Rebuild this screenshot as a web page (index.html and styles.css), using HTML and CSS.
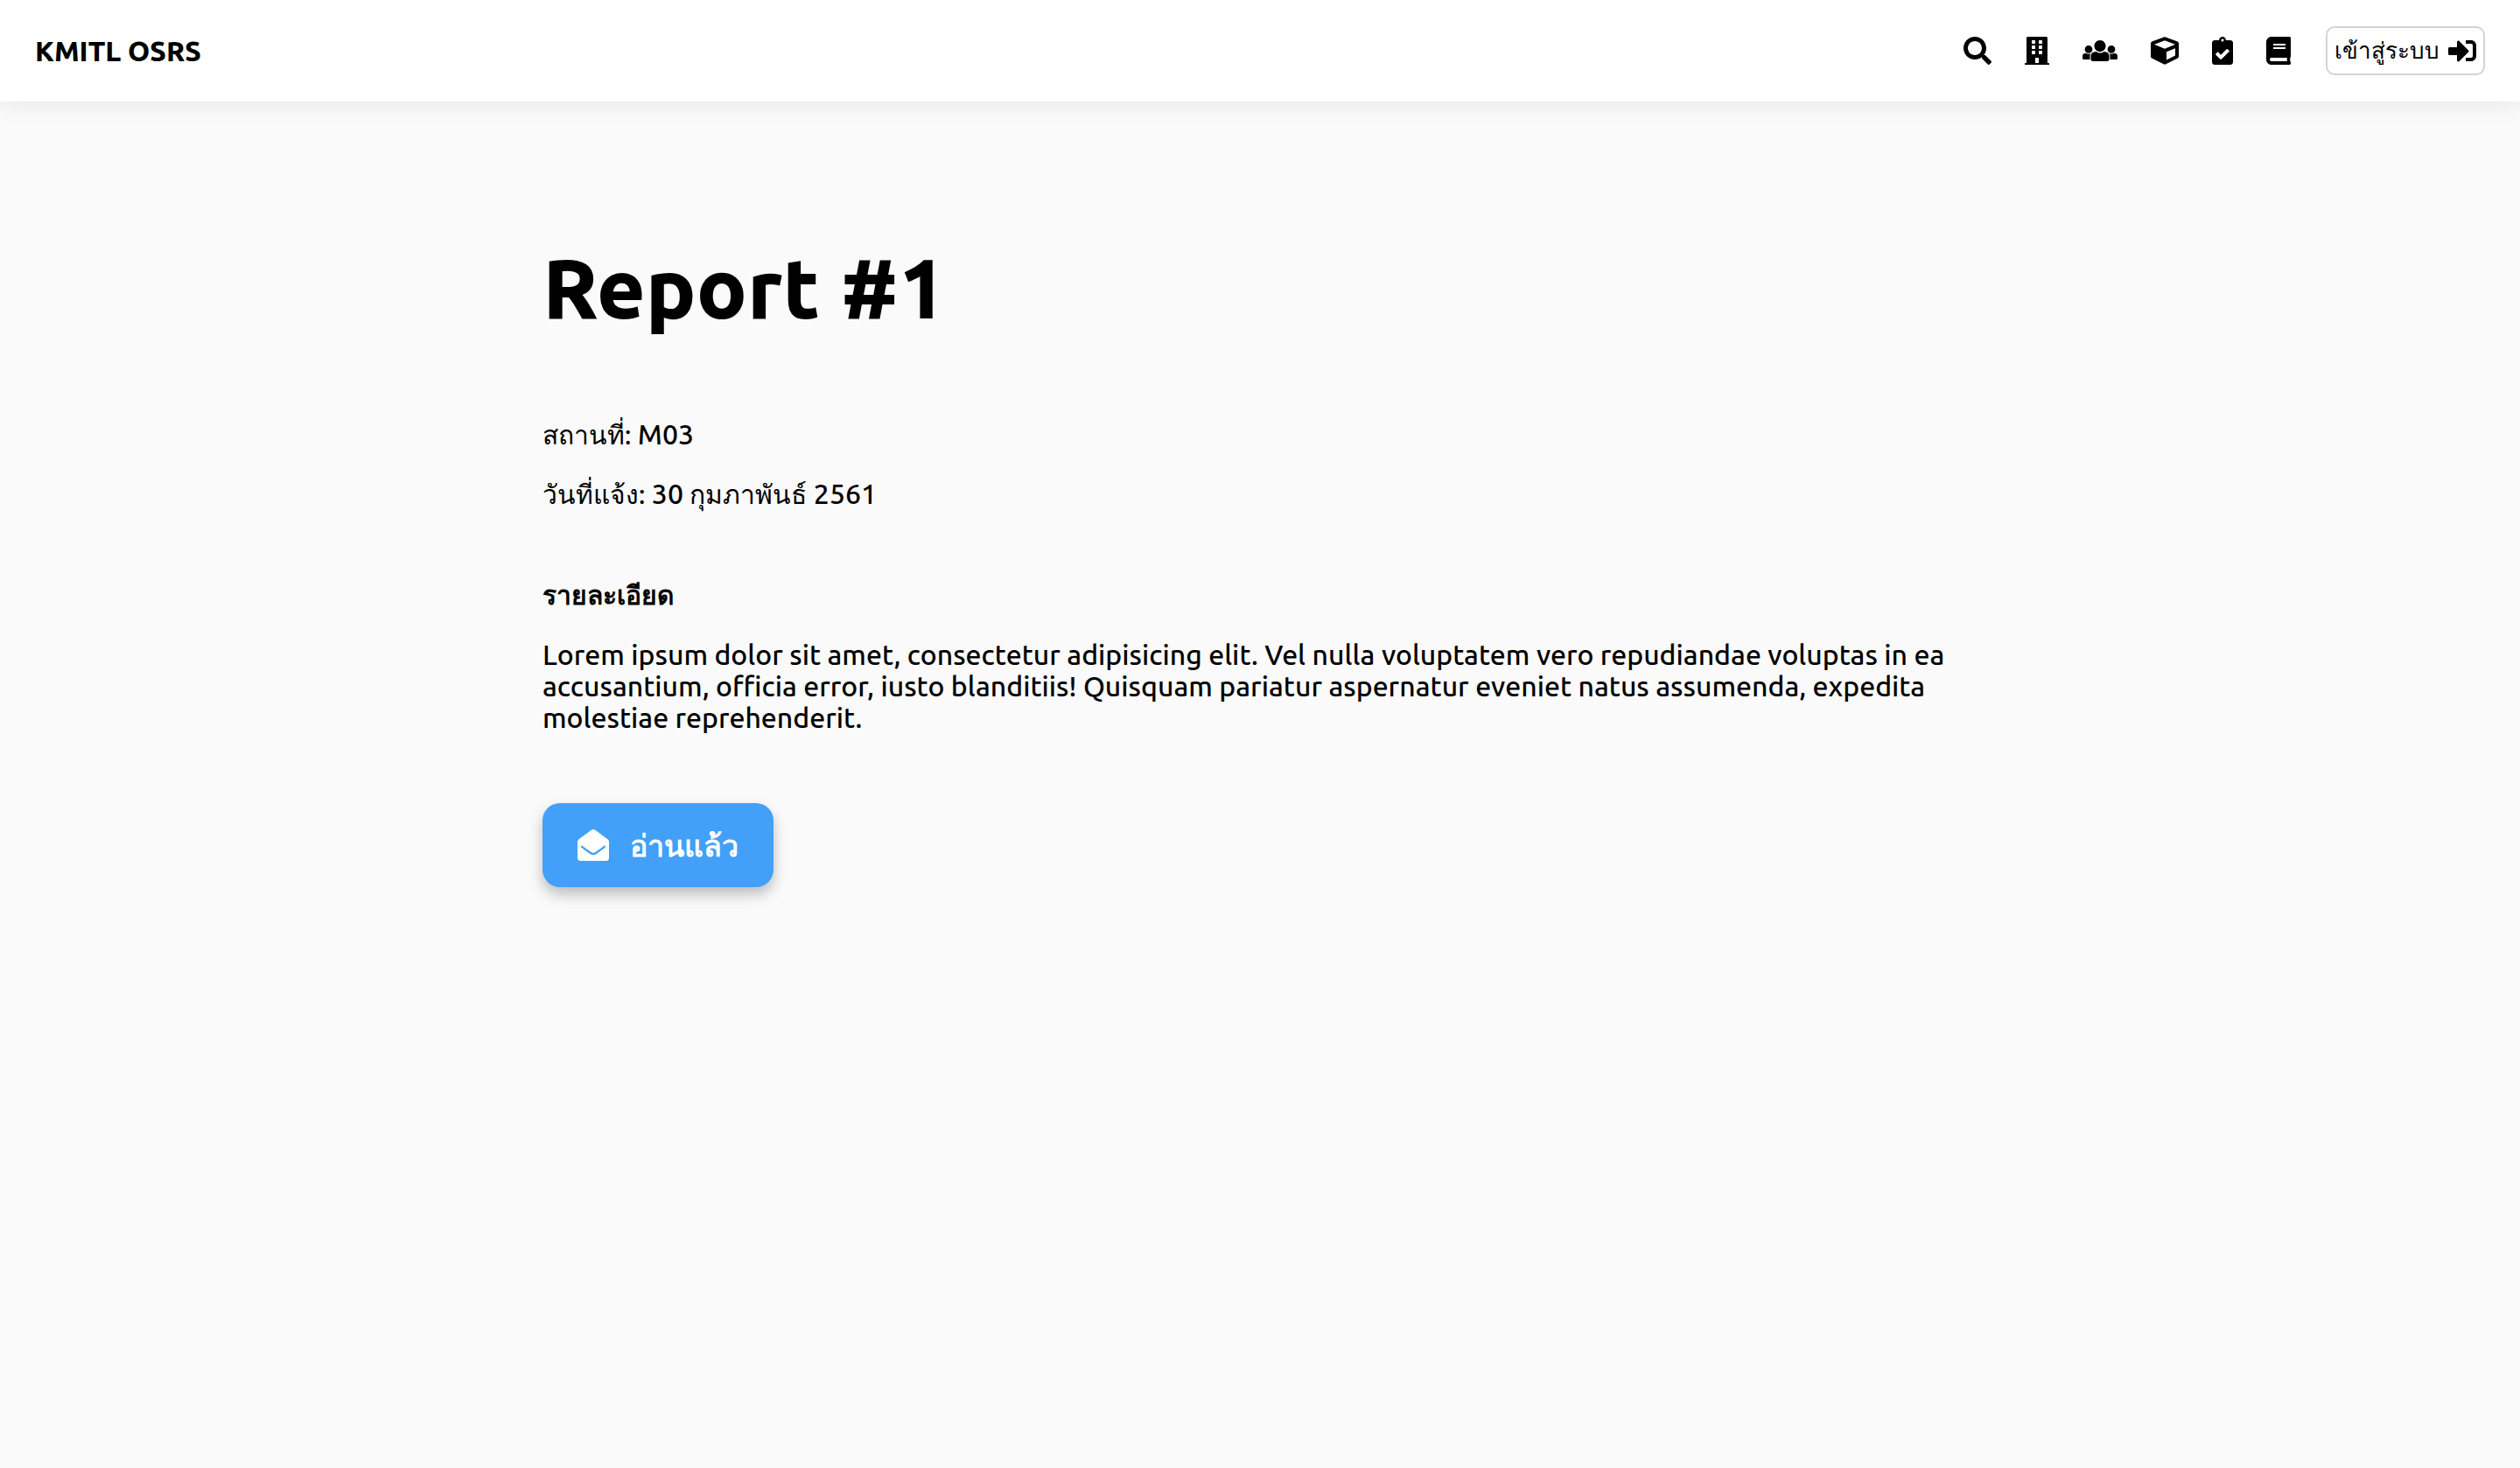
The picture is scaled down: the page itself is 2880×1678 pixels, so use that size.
FILE: index.html
```html
<!DOCTYPE html>
<html lang="th">
<head>
<meta charset="utf-8">
<title>KMITL OSRS</title>
<link rel="stylesheet" href="styles.css">
</head>
<body>
<header class="navbar">
  <a class="brand" href="#">KMITL OSRS</a>
  <nav class="menu">
    <a class="menu-link" href="#" aria-label="Search"><svg class="icon" viewBox="0 0 512 512"><path d="M505 442.7L405.3 343c-4.5-4.5-10.6-7-17-7H372c27.6-35.3 44-79.7 44-128C416 93.1 322.9 0 208 0S0 93.1 0 208s93.1 208 208 208c48.3 0 92.7-16.4 128-44v16.3c0 6.4 2.5 12.5 7 17l99.7 99.7c9.4 9.4 24.6 9.4 33.9 0l28.3-28.3c9.4-9.4 9.4-24.6.1-34zM208 336c-70.7 0-128-57.2-128-128 0-70.7 57.2-128 128-128 70.7 0 128 57.2 128 128 0 70.7-57.2 128-128 128z"/></svg></a>
    <a class="menu-link" href="#" aria-label="Buildings"><svg class="icon" viewBox="0 0 448 512"><path fill-rule="evenodd" d="M436 480h-20V24c0-13.255-10.745-24-24-24H56C42.745 0 32 10.745 32 24v456H12c-6.627 0-12 5.373-12 12v20h448v-20c0-6.627-5.373-12-12-12zM128 76q0-12 12-12h40q12 0 12 12v40q0 12-12 12h-40q-12 0-12-12zM256 76q0-12 12-12h40q12 0 12 12v40q0 12-12 12h-40q-12 0-12-12zM128 172q0-12 12-12h40q12 0 12 12v40q0 12-12 12h-40q-12 0-12-12zM256 172q0-12 12-12h40q12 0 12 12v40q0 12-12 12h-40q-12 0-12-12zM128 268q0-12 12-12h40q12 0 12 12v40q0 12-12 12h-40q-12 0-12-12zM256 268q0-12 12-12h40q12 0 12 12v40q0 12-12 12h-40q-12 0-12-12zM192 396q0-12 12-12h40q12 0 12 12v84h-64z"/></svg></a>
    <a class="menu-link" href="#" aria-label="Users"><svg class="icon" viewBox="0 0 640 512"><path d="M320 64c57.99 0 105 47.01 105 105s-47.01 105-105 105-105-47.01-105-105S262.01 64 320 64zm113.463 217.366l-39.982-9.996c-49.168 35.365-108.766 27.473-146.961 0l-39.982 9.996C174.485 289.379 152 318.177 152 351.216V412c0 19.882 16.118 36 36 36h264c19.882 0 36-16.118 36-36v-60.784c0-33.039-22.485-61.837-54.537-69.85zM528 300c38.66 0 70-31.34 70-70s-31.34-70-70-70-70 31.34-70 70 31.34 70 70 70zm-416 0c38.66 0 70-31.34 70-70s-31.34-70-70-70-70 31.34-70 70 31.34 70 70 70zm24 112v-60.784c0-16.551 4.593-32.204 12.703-45.599-29.988 14.72-63.336 8.708-85.69-7.37l-26.655 6.664C14.99 310.252 0 329.452 0 351.477V392c0 13.255 10.745 24 24 24h112.169a52.417 52.417 0 0 1-.169-4zm467.642-107.09l-26.655-6.664c-27.925 20.086-60.89 19.233-85.786 7.218C499.369 318.893 504 334.601 504 351.216V412c0 1.347-.068 2.678-.169 4H616c13.255 0 24-10.745 24-24v-40.523c0-22.025-14.99-41.225-36.358-46.567z"/></svg></a>
    <a class="menu-link" href="#" aria-label="Items"><svg class="icon" viewBox="0 0 512 512"><path d="M239.1 6.3l-208 78c-18.7 7-31.1 25-31.1 45v225.1c0 18.2 10.3 34.8 26.5 42.9l208 104c13.5 6.8 29.4 6.8 42.9 0l208-104c16.3-8.1 26.5-24.8 26.5-42.9V129.3c0-20-12.4-37.9-31.1-44.9l-208-78C262 2.2 250 2.2 239.1 6.3zM256 68.4l192 72v1.1l-192 78-192-78v-1.1l192-72zm32 356V275.5l160-65v133.9l-160 80z"/></svg></a>
    <a class="menu-link" href="#" aria-label="Tasks"><svg class="icon" viewBox="0 0 384 512"><path d="M336 64h-80c0-35.3-28.7-64-64-64s-64 28.7-64 64H48C21.5 64 0 85.5 0 112v352c0 26.5 21.5 48 48 48h288c26.5 0 48-21.5 48-48V112c0-26.5-21.5-48-48-48zM192 40c13.3 0 24 10.7 24 24s-10.7 24-24 24-24-10.7-24-24 10.7-24 24-24zm121.2 231.8l-143 141.8c-4.7 4.7-12.3 4.6-17-.1l-82.6-83.3c-4.7-4.7-4.6-12.3.1-17L99.1 285c4.7-4.7 12.3-4.6 17 .1l46 46.4 106-105.2c4.7-4.7 12.3-4.6 17 .1l28.2 28.4c4.7 4.8 4.6 12.3-.1 17z"/></svg></a>
    <a class="menu-link" href="#" aria-label="Reports"><svg class="icon" viewBox="0 0 448 512"><path fill-rule="evenodd" d="M448 360V24c0-13.3-10.7-24-24-24H96C43 0 0 43 0 96v320c0 53 43 96 96 96h328c13.3 0 24-10.7 24-24v-16c0-7.5-3.5-14.3-8.9-18.7-4.2-15.4-4.2-59.3 0-74.7 5.4-4.3 8.9-11.1 8.9-18.6zM128 134c0-3.3 2.7-6 6-6h212c3.3 0 6 2.7 6 6v20c0 3.3-2.7 6-6 6H134c-3.3 0-6-2.7-6-6zM128 198c0-3.3 2.7-6 6-6h212c3.3 0 6 2.7 6 6v20c0 3.3-2.7 6-6 6H134c-3.3 0-6-2.7-6-6zM381.4 448H96c-17.7 0-32-14.3-32-32 0-17.6 14.4-32 32-32h285.4c-1.9 17.1-1.9 46.9 0 64z"/></svg></a>
    <button class="login" type="button">เข้าสู่ระบบ <svg class="icon" viewBox="0 0 512 512"><path d="M416 448h-84c-6.6 0-12-5.4-12-12v-40c0-6.6 5.4-12 12-12h84c17.7 0 32-14.3 32-32V160c0-17.7-14.3-32-32-32h-84c-6.6 0-12-5.4-12-12V76c0-6.6 5.4-12 12-12h84c53 0 96 43 96 96v192c0 53-43 96-96 96zm-47-201L201 79c-15-15-41-4.5-41 17v96H24c-13.3 0-24 10.7-24 24v96c0 13.3 10.7 24 24 24h136v96c0 21.5 26 32 41 17l168-168c9.3-9.4 9.3-24.6 0-34z"/></svg></button>
  </nav>
</header>
<main class="report">
  <h1 class="title">Report #1</h1>
  <p class="line"><span class="thai">สถานที่:</span> M03</p>
  <p class="line"><span class="thai">วันที่แจ้ง:</span> 30 <span class="thai">กุมภาพันธ์</span> 2561</p>
  <h2 class="subtitle">รายละเอียด</h2>
  <p class="line">Lorem ipsum dolor sit amet, consectetur adipisicing elit. Vel nulla voluptatem vero repudiandae voluptas in ea accusantium, officia error, iusto blanditiis! Quisquam pariatur aspernatur eveniet natus assumenda, expedita molestiae reprehenderit.</p>
  <button class="read" type="button"><svg class="icon read-icon" viewBox="0 0 512 512"><path d="M512 464c0 26.51-21.49 48-48 48H48c-26.51 0-48-21.49-48-48V200.724a48 48 0 0 1 18.387-37.776c24.913-19.529 45.501-35.365 164.2-121.511C199.412 29.17 232.797-.347 256 .003c23.198-.354 56.596 29.172 73.413 41.433 118.687 86.137 139.303 101.995 164.2 121.512A48 48 0 0 1 512 200.724V464zm-65.666-196.605c-2.563-3.728-7.7-4.595-11.339-1.907-22.845 16.873-55.462 40.705-105.582 77.079-16.825 12.266-50.21 41.781-73.413 41.43-23.211.344-56.559-29.143-73.413-41.43-50.114-36.37-82.734-60.204-105.582-77.079-3.639-2.688-8.776-1.821-11.339 1.907l-9.072 13.196a7.998 7.998 0 0 0 1.839 10.967c22.887 16.899 55.454 40.69 105.303 76.868 20.274 14.781 56.524 47.813 92.264 47.573 35.724.242 71.961-32.771 92.264-47.573 49.85-36.179 82.418-59.97 105.303-76.868a7.998 7.998 0 0 0 1.839-10.967l-9.072-13.196z"/></svg>อ่านแล้ว</button>
</main>
</body>
</html>
```
FILE: styles.css
```css
* {
  box-sizing: border-box;
}

body {
  margin: 0;
  background: #fafafa;
  color: #000;
  font-family: Ubuntu, "Noto Sans", sans-serif;
  font-size: 32px;
  font-weight: 500;
  line-height: 36px;
}

.navbar {
  display: flex;
  align-items: center;
  justify-content: space-between;
  padding: 30px 40px;
  background: #fff;
  box-shadow: 0 8px 20px rgba(0, 0, 0, 0.06);
}

.brand {
  color: inherit;
  font-weight: 800;
  text-decoration: none;
}

.menu {
  display: flex;
  align-items: center;
  gap: 38px;
}

.menu-link {
  display: flex;
  color: inherit;
}

.icon {
  height: 32px;
  fill: currentColor;
}

.login {
  display: flex;
  align-items: center;
  gap: 10px;
  height: 56px;
  margin-left: 2px;
  padding: 0 8px;
  border: 2px solid #d3d3d3;
  border-radius: 10px;
  background: #fff;
  color: inherit;
  font: inherit;
  font-size: 26px;
}

.report {
  max-width: 1720px;
  margin: 0 auto;
  padding: 158px 40px;
}

.title {
  margin: 0 0 94px;
  font-size: 96px;
  font-weight: 800;
  line-height: 110px;
}

.line {
  margin: 0 0 32px;
}

.thai {
  font-size: 30px;
  line-height: 1;
}

.subtitle {
  margin: 80px 0 32px;
  font-size: 30px;
  line-height: 36px;
}

.read {
  display: flex;
  align-items: center;
  gap: 24px;
  height: 96px;
  margin-top: 80px;
  padding: 0 40px;
  border: 0;
  border-radius: 20px;
  background: #42a0f8;
  box-shadow: 0 8px 16px rgba(0, 0, 0, 0.25);
  color: #fff;
  font: inherit;
  font-size: 34px;
  font-weight: 800;
}

.read-icon {
  height: 36px;
}
```
